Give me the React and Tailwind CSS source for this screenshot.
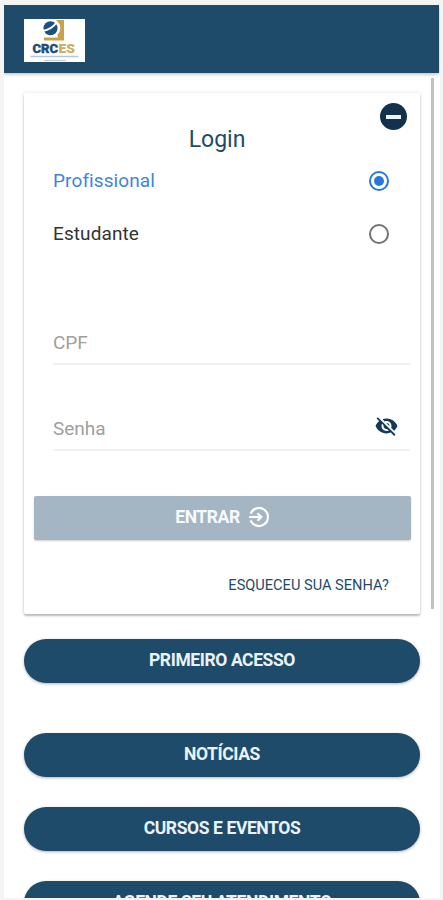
import React, { useState } from "react";
import { IoMdEyeOff } from "react-icons/io";

const links = ["NOTÍCIAS", "CURSOS E EVENTOS", "AGENDE SEU ATENDIMENTO"];

const Logo = () => (
  <svg className="w-[61px] h-[43px]" viewBox="0 0 61 43">
    <rect width="61" height="43" fill="#fff" />
    <path d="M30 1h10v20.500H20v-3h14z" fill="#c9a14a" />
    <circle cx="27" cy="9" r="9.300" fill="#fff" />
    <circle cx="26.500" cy="9.200" r="7" fill="#1d4f82" />
    <path d="M18.500 12c6-1 11-4 14-8.500" stroke="#fff" strokeWidth="2" fill="none" />
    <text x="8.500" y="34" textLength="25.500" lengthAdjust="spacingAndGlyphs" fontSize="13" fontWeight="900" fontFamily="Roboto, sans-serif" fill="#1d4d7c" stroke="#1d4d7c" strokeWidth="0.400">
      CRC
    </text>
    <text x="34.500" y="34" textLength="16.500" lengthAdjust="spacingAndGlyphs" fontSize="13" fontWeight="900" fontFamily="Roboto, sans-serif" fill="#cbab62">
      ES
    </text>
    <path d="M6.500 37.500h48" stroke="#b5c8d9" strokeWidth="1.300" />
    <path d="M20 41.500h22" stroke="#c3d0dd" strokeWidth="1.300" />
  </svg>
);

const EnterIcon = () => (
  <svg className="w-[22px] h-[22px]" viewBox="0 0 22 22" fill="none" stroke="#fff" strokeWidth="2.200">
    <path d="M2.600 7.600a9 9 0 1 1 0 6.800" />
    <path d="M1 11h11" />
    <path d="M9.500 7.200l3.800 3.800-3.800 3.800" />
  </svg>
);

const RadioRow = ({ label, checked, onSelect }) => (
  <button type="button" onClick={onSelect} className="flex h-[53px] w-full items-center justify-between">
    <span className={`pt-[2px] text-[19px] tracking-[0.1px] ${checked ? "text-[#3f84dc]" : "text-[#333333]"}`}>
      {label}
    </span>
    <span
      className={`flex h-5 w-5 items-center justify-center rounded-full border-2 ${
        checked ? "border-[#2878dc]" : "border-[#737373]"
      }`}
    >
      {checked && <span className="h-[10px] w-[10px] rounded-full bg-[#2878dc]" />}
    </span>
  </button>
);

const PillButton = ({ children }) => (
  <button
    type="button"
    className="block h-11 w-full shrink-0 rounded-full bg-[#1f4b6b] pb-[2px] text-center text-[17.5px] font-bold tracking-[-0.4px] text-[#eaf3fb] shadow-[0_1px_3px_rgba(0,0,0,0.3)]"
  >
    {children}
  </button>
);

const App = () => {
  const [profile, setProfile] = useState("profissional");

  return (
    <div className="h-[900px] w-[443px] overflow-hidden bg-[#f4f4f4] px-1 pt-[5px] pb-[2px] font-['Roboto',sans-serif]">
      <div className="flex h-full w-[436px] flex-col overflow-hidden bg-white">
        <header className="flex h-[68px] w-[435px] shrink-0 items-start bg-[#1f4b6b] pt-[14px] pl-5 shadow-[0_1px_4px_rgba(0,0,0,0.3)]">
          <Logo />
        </header>

        <div className="flex min-h-0 flex-1 overflow-hidden">
          <main className="flex w-[416px] shrink-0 flex-col pt-5 pl-5">
            <section className="h-[521px] shrink-0 rounded-[2px] bg-white shadow-[0_2px_2px_rgba(0,0,0,0.24),0_0_4px_rgba(0,0,0,0.12)]">
              <div className="flex h-[37px] justify-end pt-[10px] pr-[13px]">
                <div className="flex h-[27px] w-[27px] items-center justify-center rounded-full bg-[#12314c]">
                  <span className="h-1 w-[15px] bg-[#eef2f6]" />
                </div>
              </div>
              <h1 className="-mt-1 pr-[10px] text-center text-[23px] leading-7 text-[#1f4b6b]">Login</h1>
              <div className="pr-[31px] pl-[29px]">
                <RadioRow
                  label="Profissional"
                  checked={profile === "profissional"}
                  onSelect={() => setProfile("profissional")}
                />
                <RadioRow
                  label="Estudante"
                  checked={profile === "estudante"}
                  onSelect={() => setProfile("estudante")}
                />
              </div>
              <div className="pt-[61px] pr-[10px] pl-[29px]">
                <div className="flex h-[44px] items-center border-b-2 border-[#f1f1f1] pt-[2px]">
                  <input
                    placeholder="CPF"
                    className="w-full text-[19px] text-[#333333] outline-none placeholder:text-[#a0a0a0]"
                  />
                </div>
                <div className="mt-[42px] flex h-[44px] items-center border-b-2 border-[#f1f1f1] pr-[11px]">
                  <input
                    type="password"
                    placeholder="Senha"
                    className="min-w-0 flex-1 pt-[2px] text-[19px] text-[#333333] outline-none placeholder:text-[#a0a0a0]"
                  />
                  <IoMdEyeOff className="mb-[3px] h-[25px] w-[25px] text-[#12385a]" />
                </div>
              </div>
              <button
                type="button"
                className="mt-[45px] ml-[10px] flex h-11 w-[377px] items-center justify-center gap-2 rounded-[2px] bg-[#a4b5c4] pb-[2px] text-[17.5px] font-bold text-[#f7fafc] shadow-[0_1px_2px_rgba(0,0,0,0.2)]"
              >
                <span className="tracking-[-0.4px]">ENTRAR</span>
                <EnterIcon />
              </button>
              <div className="mt-[35px] pr-[31px] text-right text-[14.6px] leading-5 text-[#1f4b6b]">
                ESQUECEU SUA SENHA?
              </div>
            </section>

            <div className="mt-[25px]">
              <PillButton>PRIMEIRO ACESSO</PillButton>
            </div>
            <nav className="mt-[50px] flex flex-col gap-[30px]">
              {links.map((link) => (
                <PillButton key={link}>{link}</PillButton>
              ))}
            </nav>
          </main>
          <div className="mt-[5px] ml-[11px] h-[531px] w-[3px] bg-[#c2c2c2]" />
        </div>
      </div>
    </div>
  );
};

export default App;
